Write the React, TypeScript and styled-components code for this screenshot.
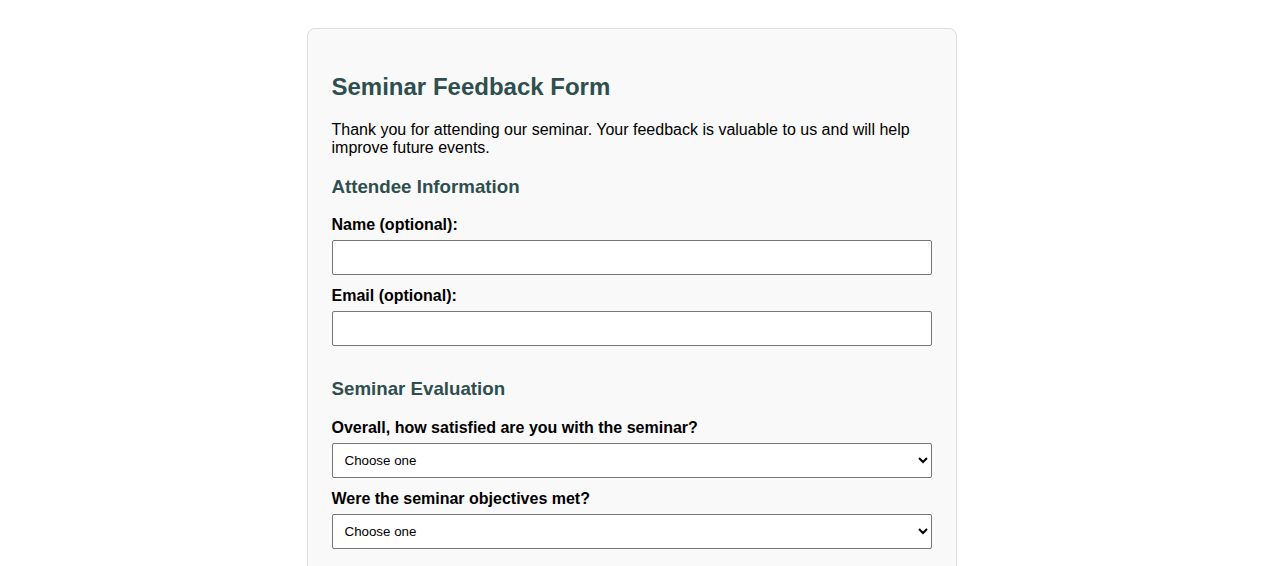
import React from "react";
import styled, { createGlobalStyle } from "styled-components";

const GlobalStyle = createGlobalStyle`
  body {
    margin: 8px;
    background: #ffffff;
    font-family: "Liberation Sans", Arial, sans-serif;
    color: #000000;
  }
`;

const Container = styled.div`
  max-width: 600px;
  margin: 20px auto;
  padding: 24px;
  background-color: #f9f9f9;
  border: 1px solid #dddddd;
  border-radius: 8px;
`;

const Title = styled.h2`
  font-size: 24px;
  margin: 19.92px 0;
  color: #2f4f4f;
`;

const Intro = styled.p`
  font-size: 16px;
  margin: 16px 0;
`;

const Section = styled.section`
  margin-bottom: 32px;
`;

const SectionTitle = styled.h3`
  font-size: 18.72px;
  margin: 18.72px 0;
  color: #2f4f4f;
`;

const Field = styled.div`
  margin-bottom: 12px;
`;

const Label = styled.label`
  display: block;
  font-weight: bold;
  font-size: 16px;
  margin-bottom: 6px;
`;

const TextInput = styled.input`
  display: block;
  width: 100%;
  box-sizing: border-box;
  height: 35px;
  padding: 8px;
  font-family: inherit;
  font-size: 14px;
  border: 1px solid #767676;
  border-radius: 2px;
  background: #ffffff;
`;

const Select = styled.select`
  display: block;
  width: 100%;
  box-sizing: border-box;
  height: 35px;
  padding: 8px;
  font-family: "Liberation Sans", Arial, sans-serif;
  font-size: 13.33px;
  color: #000000;
  border: 1px solid #767676;
  border-radius: 2px;
  background: #ffffff;
`;

const TextArea = styled.textarea`
  display: block;
  width: 100%;
  box-sizing: border-box;
  min-height: 80px;
  padding: 8px;
  font-family: inherit;
  border: 1px solid #767676;
  border-radius: 2px;
`;

const SubmitButton = styled.button`
  padding: 10px 20px;
  font-size: 16px;
  color: #ffffff;
  background-color: #2f4f4f;
  border: none;
  border-radius: 4px;
`;

const ratingOptions = ["Very satisfied", "Satisfied", "Neutral", "Dissatisfied", "Very dissatisfied"];
const yesNoOptions = ["Yes, fully", "Partially", "No"];

type ChoiceProps = { id: string; label: string; options: string[] };

const ChoiceField = ({ id, label, options }: ChoiceProps) => (
  <Field>
    <Label htmlFor={id}>{label}</Label>
    <Select id={id} defaultValue="">
      <option value="">Choose one</option>
      {options.map(o => (
        <option key={o} value={o}>{o}</option>
      ))}
    </Select>
  </Field>
);

const App: React.FC = () => {
  return (
    <>
      <GlobalStyle />
      <Container>
        <Title>Seminar Feedback Form</Title>
        <Intro>
          Thank you for attending our seminar. Your feedback is valuable to us and will help improve future events.
        </Intro>

        <form onSubmit={e => e.preventDefault()}>
          <Section>
            <SectionTitle>Attendee Information</SectionTitle>
            <Field>
              <Label htmlFor="name">Name (optional):</Label>
              <TextInput id="name" type="text" />
            </Field>
            <Field>
              <Label htmlFor="email">Email (optional):</Label>
              <TextInput id="email" type="email" />
            </Field>
          </Section>

          <Section>
            <SectionTitle>Seminar Evaluation</SectionTitle>
            <ChoiceField id="satisfaction" label="Overall, how satisfied are you with the seminar?" options={ratingOptions} />
            <ChoiceField id="objectives" label="Were the seminar objectives met?" options={yesNoOptions} />
          </Section>

          <Section>
            <SectionTitle>Speaker Evaluation</SectionTitle>
            <ChoiceField id="speaker" label="How would you rate the speaker?" options={ratingOptions} />
          </Section>

          <Section>
            <SectionTitle>Additional Comments</SectionTitle>
            <Field>
              <Label htmlFor="comments">What could we improve?</Label>
              <TextArea id="comments" />
            </Field>
          </Section>

          <SubmitButton type="submit">Submit Feedback</SubmitButton>
        </form>
      </Container>
    </>
  );
};

export default App;
